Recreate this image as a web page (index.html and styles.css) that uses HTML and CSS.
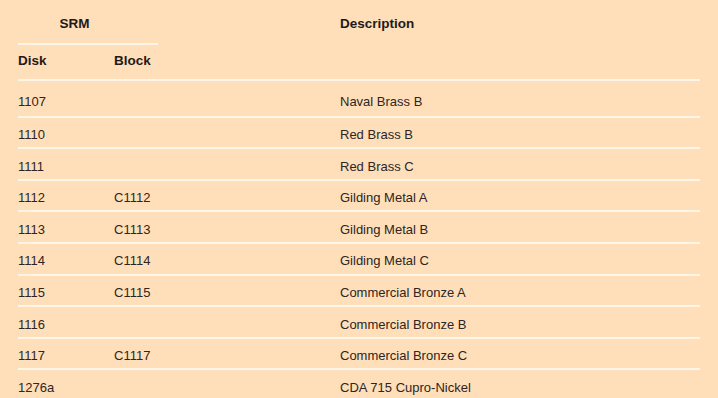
FILE: index.html
```html
<!DOCTYPE html>
<html>
<head>
<meta charset="utf-8">
<link rel="stylesheet" href="styles.css">
</head>
<body>
<table class="srm-table">
  <colgroup>
    <col class="c-disk">
    <col class="c-block">
    <col class="c-desc">
  </colgroup>
  <thead>
    <tr class="h1">
      <th colspan="2" class="srm">SRM</th>
      <th class="desc-head">Description</th>
    </tr>
    <tr class="h2">
      <th class="sub">Disk</th>
      <th class="sub">Block</th>
      <th class="sub"></th>
    </tr>
  </thead>
  <tbody>
    <tr class="first"><td>1107</td><td></td><td class="desc">Naval Brass B</td></tr>
    <tr><td>1110</td><td></td><td class="desc">Red Brass B</td></tr>
    <tr><td>1111</td><td></td><td class="desc">Red Brass C</td></tr>
    <tr><td>1112</td><td>C1112</td><td class="desc">Gilding Metal A</td></tr>
    <tr><td>1113</td><td>C1113</td><td class="desc">Gilding Metal B</td></tr>
    <tr><td>1114</td><td>C1114</td><td class="desc">Gilding Metal C</td></tr>
    <tr><td>1115</td><td>C1115</td><td class="desc">Commercial Bronze A</td></tr>
    <tr><td>1116</td><td></td><td class="desc">Commercial Bronze B</td></tr>
    <tr><td>1117</td><td>C1117</td><td class="desc">Commercial Bronze C</td></tr>
    <tr><td>1276a</td><td></td><td class="desc">CDA 715 Cupro-Nickel</td></tr>
  </tbody>
</table>
</body>
</html>
```

FILE: styles.css
```css
html, body {
  margin: 0;
  padding: 0;
  background: #fedfb9;
}
body {
  padding: 0 18px 0 18px;
  font-family: "Liberation Sans", Arial, sans-serif;
  color: #2e2523;
  overflow: hidden;
  height: 398px;
}
.srm-table {
  width: 682px;
  border-collapse: collapse;
  table-layout: fixed;
  font-size: 13px;
}
.c-disk { width: 96px; }
.c-block { width: 44px; }
.srm-table th, .srm-table td {
  padding: 0;
  text-align: left;
  white-space: nowrap;
  line-height: 16px;
  vertical-align: top;
  box-sizing: border-box;
}
.srm-table th {
  font-weight: bold;
  font-size: 13.5px;
  color: #1f1a19;
}
.h1 th {
  height: 44px;
  padding-top: 16px;
}
.srm {
  padding-right: 27px !important;
  text-align: center !important;
  border-bottom: 2px solid #fff6ea;
}
.desc-head {
  padding-left: 182px !important;
}
.h2 th {
  padding: 8px 0 10px 0;
  border-bottom: 2px solid #fff6ea;
}
.srm-table td {
  padding-top: 9.5px;
  height: 31.6px;
  border-bottom: 2px solid #fff6ea;
}
.srm-table tr.first td {
  padding-top: 12.5px;
  height: 36.6px;
}
.srm-table td.desc {
  padding-left: 182px;
}
```
